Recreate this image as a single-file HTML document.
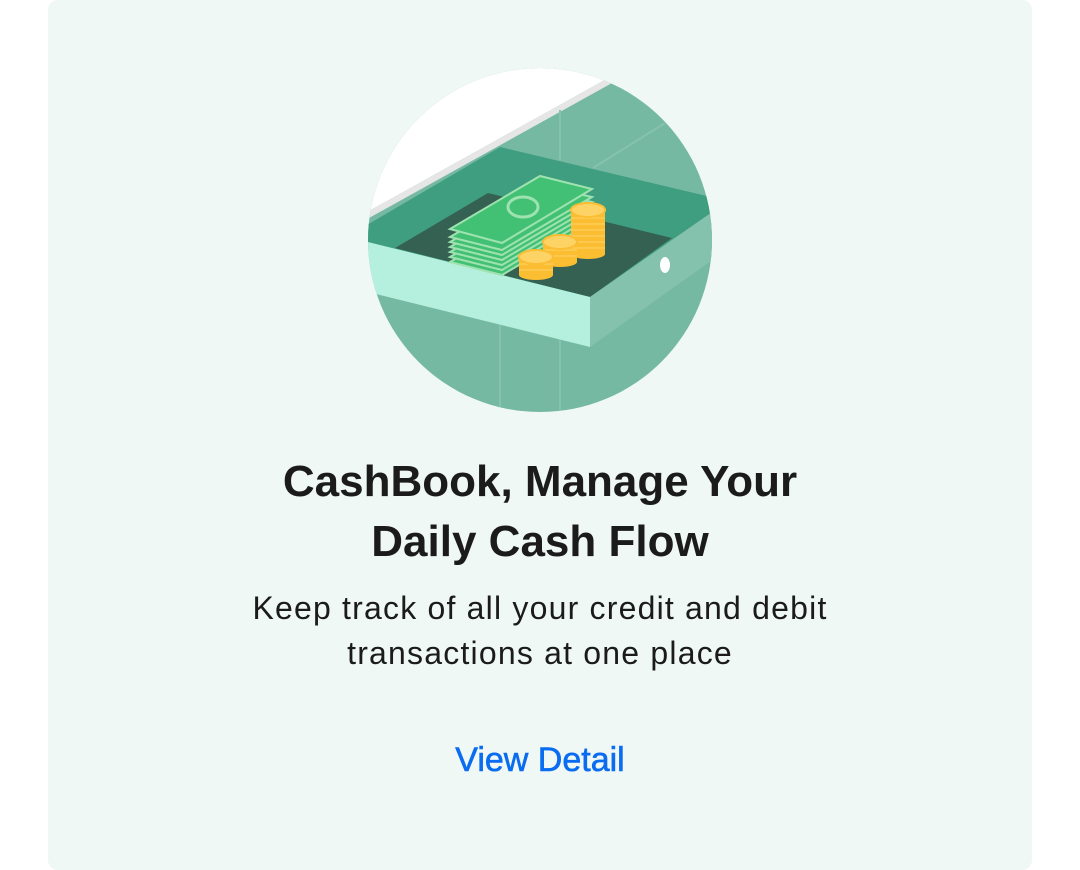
<!DOCTYPE html>
<html><head><meta charset="utf-8"><style>
html,body{margin:0;padding:0;background:#fff;width:1080px;height:870px;overflow:hidden;font-family:"Liberation Sans",sans-serif}
.card{position:absolute;left:48px;top:0;width:984px;height:870px;background:#eff8f5;border-radius:10px}
.t{position:absolute;left:0;width:1080px;text-align:center;color:#1b1b1b}
</style></head><body>
<div class="card"></div>
<svg style="position:absolute;left:0;top:0" width="1080" height="870">
<defs><clipPath id="c"><circle cx="540" cy="240" r="172"/></clipPath></defs>
<g clip-path="url(#c)">
<rect x="360" y="60" width="360" height="360" fill="#76b9a3"/>
<polygon points="360,60 612,60 612,76 360,216" fill="#fff"/>
<polygon points="360,216 612,76 612,83 360,223" fill="#e6e6e6"/>
<line x1="560" y1="110" x2="560" y2="160" stroke="#86c3ae" stroke-width="2"/>
<line x1="593" y1="168" x2="665" y2="123" stroke="#86c3ae" stroke-width="2"/>
<line x1="500" y1="320" x2="500" y2="420" stroke="#86c3ae" stroke-width="2"/>
<line x1="560" y1="330" x2="560" y2="420" stroke="#86c3ae" stroke-width="2"/>
<polygon points="360,229 500,147 715,198 715,212 590,297 360,242" fill="#3f9e80"/>
<polygon points="395,248 488,193 672,238 590,297" fill="#356152"/>
<polygon points="360,240 590,297 590,347 360,290" fill="#b5efdd"/>
<polygon points="590,297 715,210 715,258 590,347" fill="#85c2ad"/>
<ellipse cx="665" cy="265" rx="5" ry="8" fill="#fff"/>
<g stroke="#9ee2b0" stroke-width="2" fill="#42c174">
<polygon points="450,262 540,210 592,222 502,275"/>
<polygon points="450,257 540,205 592,217 502,270"/>
<polygon points="450,252 540,200 592,212 502,265"/>
<polygon points="450,247 540,195 592,207 502,260"/>
<polygon points="450,242 540,190 592,202 502,255"/>
<polygon points="450,237 540,185 592,197 502,250"/>
<polygon points="450,229 540,176 592,189 502,243"/>
</g>
<ellipse cx="523" cy="207" rx="15" ry="10" fill="none" stroke="#9ee2b0" stroke-width="3"/>
<g fill="#fbbd32">
<rect x="571" y="210" width="34" height="44"/><ellipse cx="588" cy="254" rx="17" ry="5"/>
<rect x="543" y="242" width="34" height="20"/><ellipse cx="560" cy="262" rx="17" ry="5"/>
<rect x="519" y="257" width="34" height="18"/><ellipse cx="536" cy="275" rx="17" ry="5"/>
</g>
<g stroke="#fdd56a" stroke-width="1">
<path d="M571 218h34M571 224h34M571 230h34M571 236h34M571 242h34M571 248h34M543 250h34M543 256h34M519 264h34M519 270h34"/>
</g>
<ellipse cx="588" cy="210" rx="17" ry="7" fill="#fed366" stroke="#fbbd32" stroke-width="2"/>
<ellipse cx="560" cy="242" rx="17" ry="7" fill="#fed366" stroke="#fbbd32" stroke-width="2"/>
<ellipse cx="536" cy="257" rx="17" ry="7" fill="#fed366" stroke="#fbbd32" stroke-width="2"/>
</g>
</svg>
<div class="t" style="top:452px;font-size:44px;line-height:60px;font-weight:bold">CashBook, Manage Your<br>Daily Cash Flow</div>
<div class="t" style="top:586px;font-size:32px;line-height:45px;letter-spacing:1.2px">Keep track of all your credit and debit<br>transactions at one place</div>
<div class="t" style="top:740px;font-size:34px;line-height:40px;color:#0a6cf0;-webkit-text-stroke:0.6px #0a6cf0">View Detail</div>
</body></html>
